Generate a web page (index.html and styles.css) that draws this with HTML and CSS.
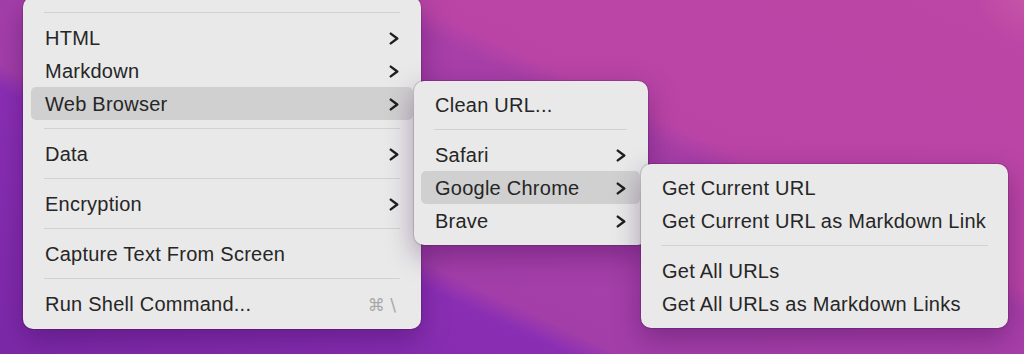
FILE: index.html
```html
<!DOCTYPE html>
<html>
    <head>
        <meta charset="utf-8" />
        <title>Menu</title>
        <link rel="stylesheet" href="styles.css">
    </head>
    <body>
        <div class="desktop">
            <div class="menu menu-main">
                <div class="sep"></div>
                <div class="item"><span class="label">HTML</span><svg class="chev" viewBox="0 0 9 12"><polyline points="1.5,1.5 7.5,6 1.5,10.5" /></svg></div>
                <div class="item"><span class="label">Markdown</span><svg class="chev" viewBox="0 0 9 12"><polyline points="1.5,1.5 7.5,6 1.5,10.5" /></svg></div>
                <div class="item active"><span class="label">Web Browser</span><svg class="chev" viewBox="0 0 9 12"><polyline points="1.5,1.5 7.5,6 1.5,10.5" /></svg></div>
                <div class="sep"></div>
                <div class="item"><span class="label">Data</span><svg class="chev" viewBox="0 0 9 12"><polyline points="1.5,1.5 7.5,6 1.5,10.5" /></svg></div>
                <div class="sep"></div>
                <div class="item"><span class="label">Encryption</span><svg class="chev" viewBox="0 0 9 12"><polyline points="1.5,1.5 7.5,6 1.5,10.5" /></svg></div>
                <div class="sep"></div>
                <div class="item"><span class="label">Capture Text From Screen</span></div>
                <div class="sep"></div>
                <div class="item"><span class="label">Run Shell Command...</span><span class="shortcut">⌘ \</span></div>
            </div>

            <!-- Web Browser submenu -->
            <div class="menu menu-browser">
                <div class="item"><span class="label">Clean URL...</span></div>
                <div class="sep"></div>
                <div class="item"><span class="label">Safari</span><svg class="chev" viewBox="0 0 9 12"><polyline points="1.5,1.5 7.5,6 1.5,10.5" /></svg></div>
                <div class="item active"><span class="label">Google Chrome</span><svg class="chev" viewBox="0 0 9 12"><polyline points="1.5,1.5 7.5,6 1.5,10.5" /></svg></div>
                <div class="item"><span class="label">Brave</span><svg class="chev" viewBox="0 0 9 12"><polyline points="1.5,1.5 7.5,6 1.5,10.5" /></svg></div>
            </div>

            <!-- Google Chrome submenu -->
            <div class="menu menu-chrome">
                <div class="item"><span class="label">Get Current URL</span></div>
                <div class="item"><span class="label">Get Current URL as Markdown Link</span></div>
                <div class="sep"></div>
                <div class="item"><span class="label">Get All URLs</span></div>
                <div class="item"><span class="label">Get All URLs as Markdown Links</span></div>
            </div>
        </div>
    </body>
</html>
```

FILE: styles.css
```css
html, body {
    margin: 0;
    padding: 0;
}
.desktop {
    position: relative;
    width: 1024px;
    height: 354px;
    overflow: hidden;
    font-family: "Liberation Sans", Arial, sans-serif;
    font-size: 20px;
    letter-spacing: 0.25px;
    color: #262626;
    background:
        radial-gradient(circle at 1030px -10px, rgba(214, 110, 170, 0.45) 0, rgba(214, 110, 170, 0) 55px),
        linear-gradient(25deg, #7c29a8 0, #8a2eb4 240px, #a33ea9 262px, #a83fa8 470px, #b944a6 492px, #bc46a5 750px);
}
.menu {
    background: #e9e9e9;
    border-radius: 10px;
    box-shadow: 0 0 0 1px rgba(0, 0, 0, 0.13), 0 10px 28px rgba(45, 0, 70, 0.35);
    box-sizing: border-box;
}
.menu-main {
    width: 398px;
    margin: -3px 0 0 23px;
    padding: 7px 8px 9px;
}
.menu-browser {
    position: absolute;
    left: 414px;
    top: 81px;
    width: 234px;
    padding: 7px 8px 8px 7px;
}
.menu-chrome {
    position: absolute;
    left: 641px;
    top: 164px;
    width: 367px;
    padding: 7px 7px 8px;
}
.item {
    display: flex;
    align-items: center;
    box-sizing: border-box;
    height: 33px;
    padding: 2px 15px 0 14px;
    border-radius: 5px;
    white-space: nowrap;
}
.item.active {
    background: #d0d0d0;
}
.label {
    flex: 1;
}
.chev {
    width: 10px;
    height: 13px;
    margin-right: -1px;
    fill: none;
    stroke: #1e1e1e;
    stroke-width: 2.2;
    stroke-linecap: round;
    stroke-linejoin: round;
}
.shortcut {
    color: #a8a8a8;
    font-family: "DejaVu Sans", sans-serif;
    font-size: 17px;
    letter-spacing: 0;
    margin-right: 2px;
}
.sep {
    height: 1px;
    margin: 8px 13px;
    background: #d2d2d2;
}
```
